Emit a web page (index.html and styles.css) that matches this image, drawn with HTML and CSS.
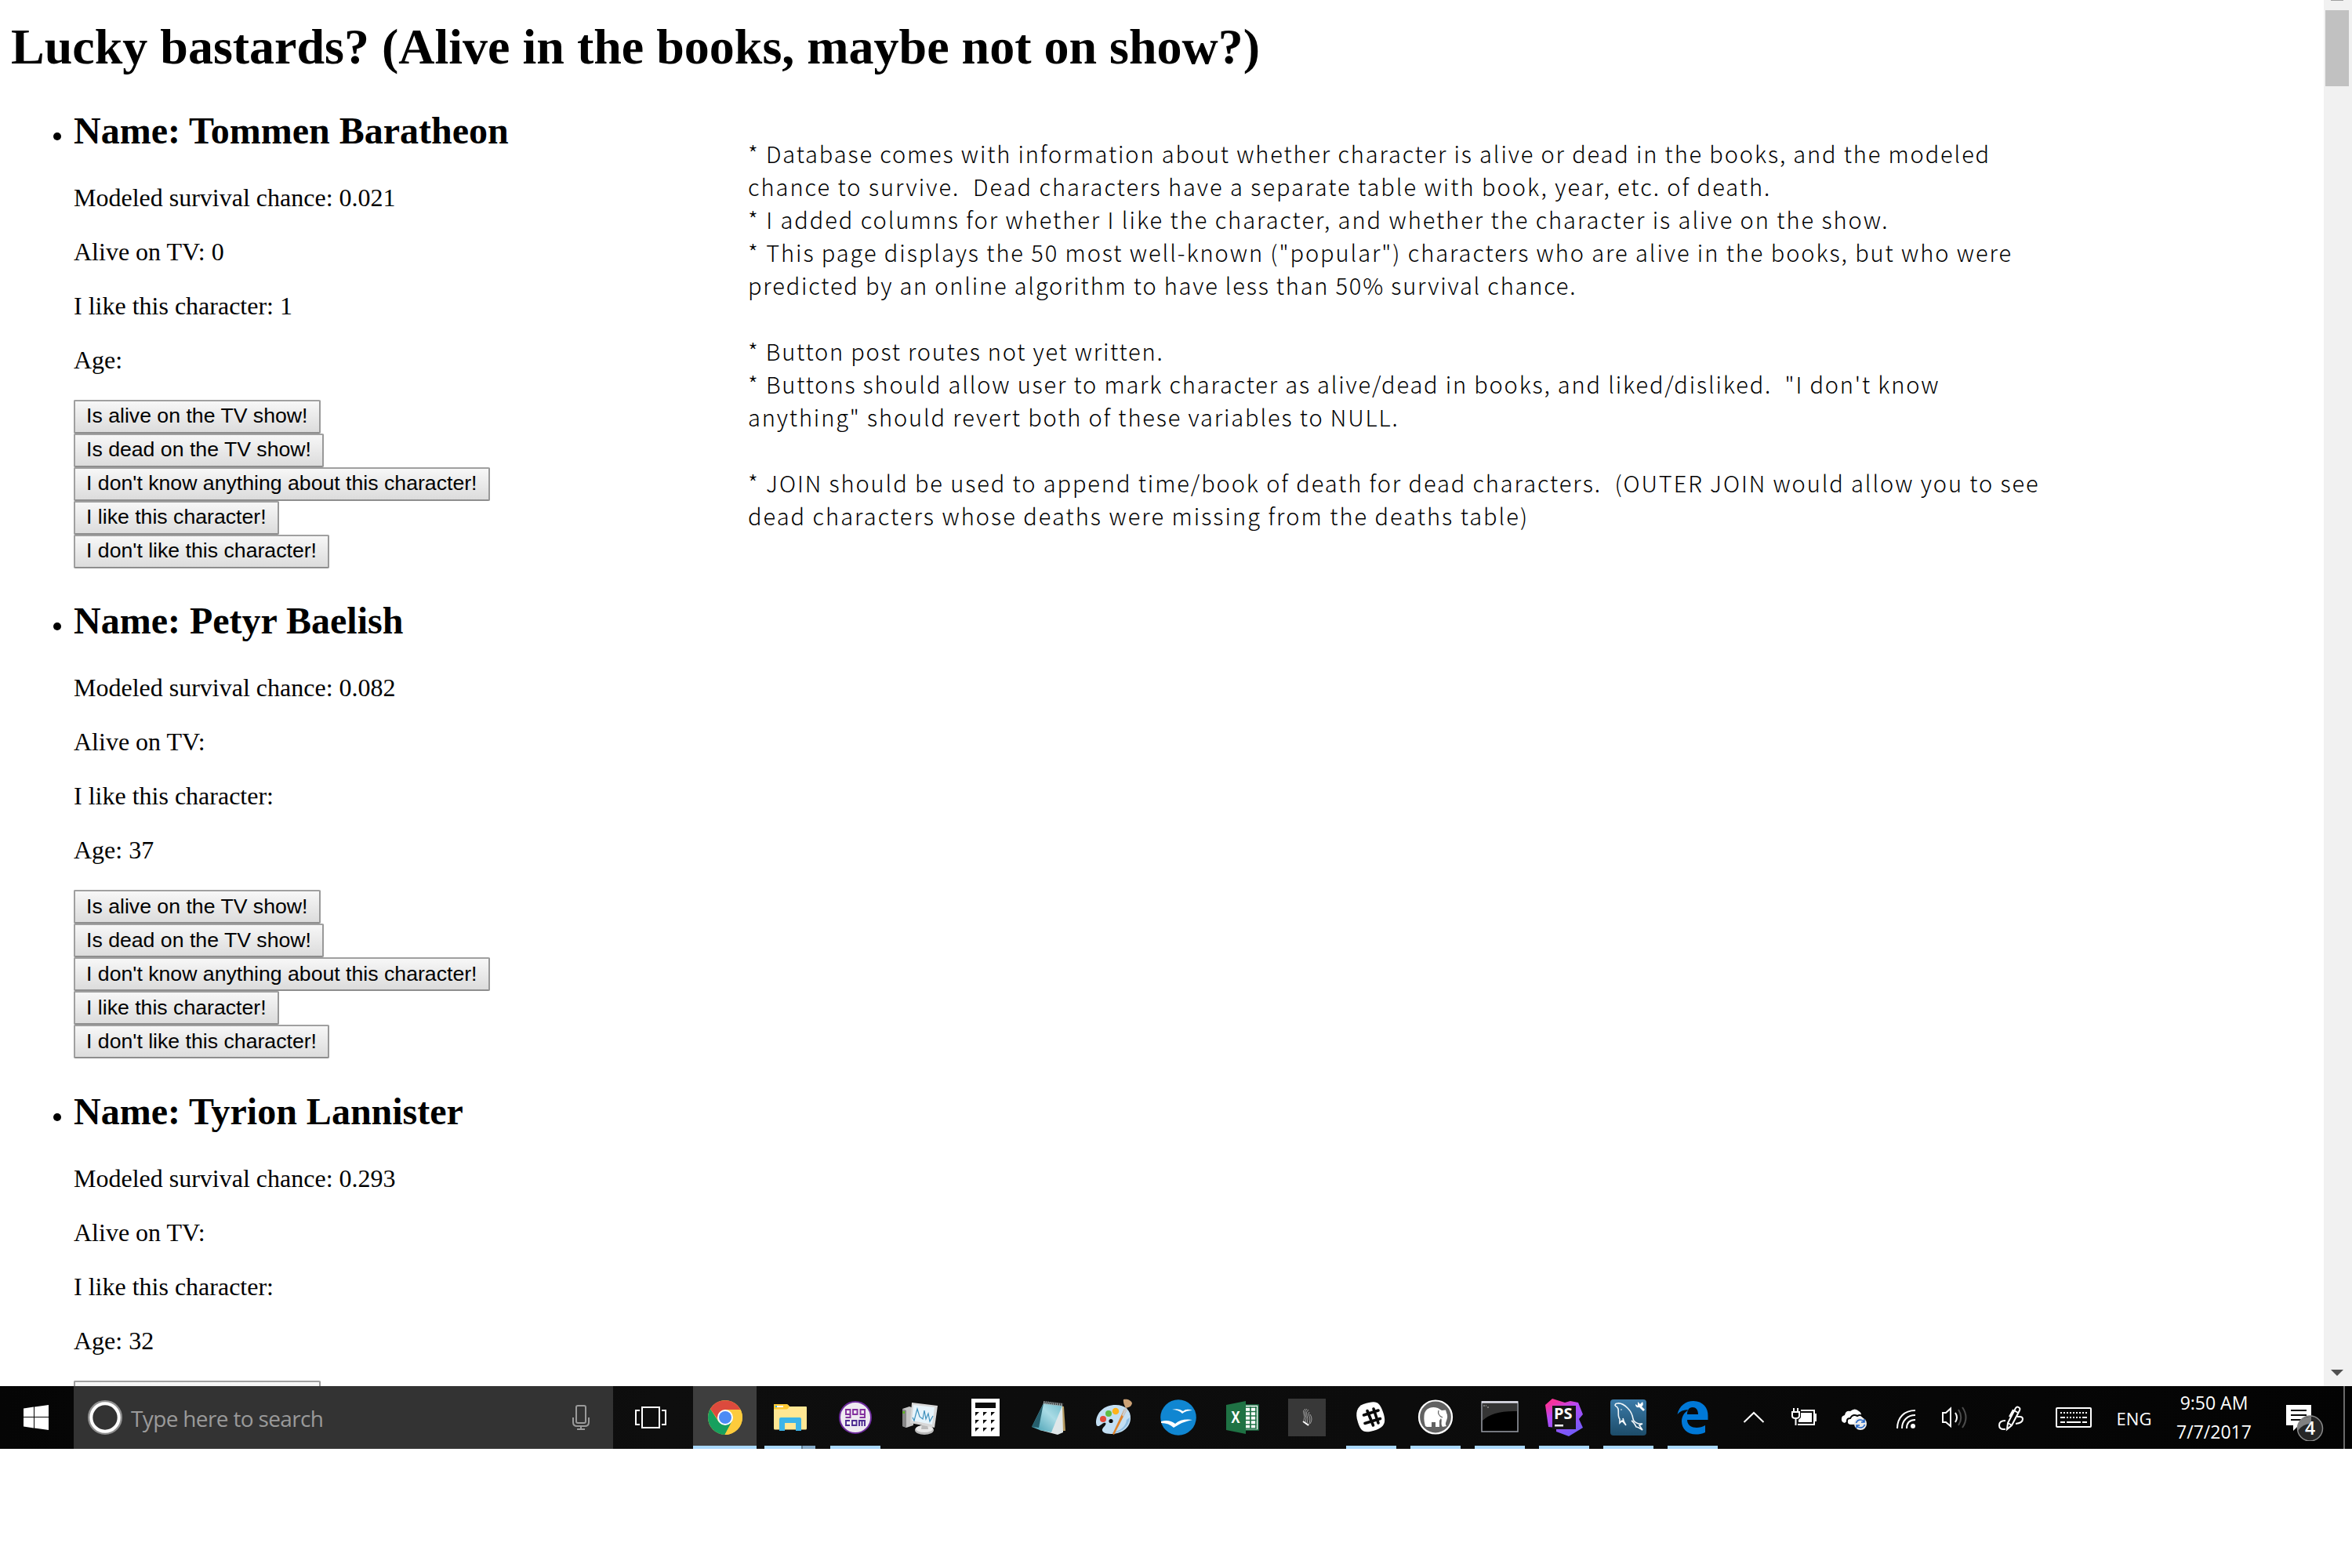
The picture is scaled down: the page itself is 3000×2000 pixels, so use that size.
FILE: index.html
```html
<!DOCTYPE html>
<html lang="en">
<head>
<meta charset="utf-8">
<title>Lucky bastards?</title>
<link rel="stylesheet" href="styles.css">
</head>
<body>
<div class="window">
  <main class="page">
    <h1>Lucky bastards? (Alive in the books, maybe not on show?)</h1>
    <div class="columns">
      <ul class="characters">
        <li>
          <h2>Name: Tommen Baratheon</h2>
          <p>Modeled survival chance: 0.021</p>
          <p>Alive on TV: 0</p>
          <p>I like this character: 1</p>
          <p>Age:</p>
          <div class="actions">
            <button>Is alive on the TV show!</button>
            <button>Is dead on the TV show!</button>
            <button>I don't know anything about this character!</button>
            <button>I like this character!</button>
            <button>I don't like this character!</button>
          </div>
        </li>
        <li>
          <h2>Name: Petyr Baelish</h2>
          <p>Modeled survival chance: 0.082</p>
          <p>Alive on TV:</p>
          <p>I like this character:</p>
          <p>Age: 37</p>
          <div class="actions">
            <button>Is alive on the TV show!</button>
            <button>Is dead on the TV show!</button>
            <button>I don't know anything about this character!</button>
            <button>I like this character!</button>
            <button>I don't like this character!</button>
          </div>
        </li>
        <li>
          <h2>Name: Tyrion Lannister</h2>
          <p>Modeled survival chance: 0.293</p>
          <p>Alive on TV:</p>
          <p>I like this character:</p>
          <p>Age: 32</p>
          <div class="actions">
            <button class="cut"></button>
          </div>
        </li>
      </ul>
      <div class="notes">
        <div>* Database comes with information about whether character is alive or dead in the books, and the modeled</div>
        <div>chance to survive.  Dead characters have a separate table with book, year, etc. of death.</div>
        <div>* I added columns for whether I like the character, and whether the character is alive on the show.</div>
        <div>* This page displays the 50 most well-known ("popular") characters who are alive in the books, but who were</div>
        <div>predicted by an online algorithm to have less than 50% survival chance.</div>
        <div class="gap">* Button post routes not yet written.</div>
        <div>* Buttons should allow user to mark character as alive/dead in books, and liked/disliked.  "I don't know</div>
        <div>anything" should revert both of these variables to NULL.</div>
        <div class="gap">* JOIN should be used to append time/book of death for dead characters.  (OUTER JOIN would allow you to see</div>
        <div>dead characters whose deaths were missing from the deaths table)</div>
      </div>
    </div>
  </main>
  <div class="scrollbar">
    <span class="arrow-up"></span>
    <span class="thumb"></span>
    <span class="arrow-down"></span>
  </div>
</div>
<footer class="taskbar">
  <div class="start">
    <svg width="32" height="32" viewBox="0 0 32 32" fill="#fff"><path d="M0 4.5L13 2.6V15H0zM14 2.4L32 0V15H14zM0 16H13V29.5L0 27.6zM14 16H32V32L14 29.6z"/></svg>
  </div>
  <div class="search">
    <svg width="46" height="46" viewBox="0 0 46 46" fill="none"><circle cx="23" cy="23" r="20.5" stroke="#8f8f8f" stroke-width="3"/><circle cx="23" cy="23" r="17.7" stroke="#fff" stroke-width="4"/></svg>
    <span class="hint">Type here to search</span>
    <svg width="22" height="32" viewBox="0 0 22 32" fill="none" stroke="#9a9a9a" stroke-width="2"><rect x="5" y="1" width="12" height="22" rx="2"/><path d="M1 16V22Q1 27 6 27H16Q21 27 21 22V16M11 27V31M6 31H16"/></svg>
  </div>
  <div class="taskview">
    <svg width="40" height="28" viewBox="0 0 40 28" fill="none" stroke="#fff" stroke-width="2"><rect x="9" y="1" width="22" height="26"/><path d="M6 5H1V23H6M34 5H39V23H34"/></svg>
  </div>
  <div class="apps">
    <div class="app active"><svg viewBox="0 0 48 48"><circle cx="24" cy="24" r="22" fill="#fdcb3c"/><path d="M5 13A22 22 0 0 0 23.500 46L33 28L24 24L16 30z" fill="#17a05e"/><path d="M24 14H43.500A22 22 0 0 1 23.500 46L33 29z" fill="#fdcb3c"/><path d="M5 13A22 22 0 0 1 43.500 14H24Q16 15 15 27z" fill="#dc4a3d"/><circle cx="24" cy="24" r="10" fill="#fff"/><circle cx="24" cy="24" r="8" fill="#4c8bf5"/></svg></div>
    <div class="app wide split"><svg viewBox="0 0 48 48"><path d="M3 8Q3 7 4 7H19Q21 7 23 10H44Q45 10 45 11V38Q45 39.500 43.500 39.500H4.500Q3 39.500 3 38z" fill="#ffe793"/><path d="M3 8Q3 7 4 7H19Q21 7 23 10Q21 13.500 19 13.500H3z" fill="#ffc933"/><path d="M5 9H15V11H5z" fill="#fff"/><path d="M5 9H7V11H5z" fill="#3bb4e8"/><path d="M10 41V26Q10 24 12 24H36Q38 24 38 26V41H31V31H17V41z" fill="#3bb4e8"/></svg></div>
    <div class="app wide open"><svg viewBox="0 0 48 48"><circle cx="24" cy="24" r="20" fill="#eeeaf1" stroke="#6d2a9c" stroke-width="2"/><g fill="none" stroke="#84309e" stroke-width="1.900"><path d="M17.500 14H12V20H17.500M17.500 13V24H11.500M21 14H26.500V20H21zM36 14H30.500V20H36M36 13V24H29.500"/><path stroke="#4d2c91" d="M17 28H12V34H17M20 28H25.500V34H20zM29 35V28H36V35M32.500 28V35"/></g></svg></div>
    <div class="app wide"><svg viewBox="0 0 48 48"><path d="M1 13L10 10L15 12V34L6 37L1 35z" fill="#c6c6c6"/><path d="M1 13L6 15V37L1 35z" fill="#888"/><path d="M1.500 16H4V19H1.500z" fill="#5ab51c"/><ellipse cx="29" cy="40" rx="12" ry="6" fill="#b9b9b9"/><ellipse cx="29" cy="38.500" rx="11" ry="4.500" fill="#e9e9e9"/><path d="M26 32H33L34 39H25z" fill="#bbb"/><path d="M13 5L46 9L42 37L11 31z" fill="#d8d8d8"/><path d="M15 8L42 11L39 33L13 28z" fill="#e7f4fb"/><path d="M14 24L16 28L20 13L23 23L27 26L29 15L31 26L34 19L36 29L40 22" fill="none" stroke="#3e91bd" stroke-width="1.200"/></svg></div>
    <div class="app wide"><svg viewBox="0 0 48 48"><path d="M6 0H42V48H6z" fill="#fff"/><path fill="#0c0c0c" d="M11 5H37V12H11zM11 17H16L11 22zM21 17H26L21 22zM31 17H36L31 22zM11 27H16L11 32zM21 27H26L21 32zM31 27H36L31 32zM11 37H16L11 42zM21 37H26L21 42zM31 37H36L31 42z"/></svg></div>
    <div class="app"><svg viewBox="0 0 48 48"><defs><linearGradient id="pad" x1="0" y1="1" x2="1" y2="0"><stop offset="0" stop-color="#3d9aae"/><stop offset=".6" stop-color="#a9dbe5"/><stop offset="1" stop-color="#72bccb"/></linearGradient></defs><path d="M38 9L42 10L44 41H36z" fill="#b69b62"/><path d="M40 9L41 43L34 46L11 40z" fill="#dfe7e9"/><path d="M16 6L40 9L26 43L11 40L1 36z" fill="url(#pad)"/><path d="M16 6L1 36L10 37z" fill="#265f6d"/><path d="M16 5L41 8" stroke="#a2aaac" stroke-width="4" stroke-dasharray="1.500 1"/></svg></div>
    <div class="app"><svg viewBox="0 0 48 48"><path d="M1 31C1 18 11 8 26 8C38 8 46 15 45 26C44 38 33 45 20 45C12 45 8 42 9 39C10 36 15 33 13 31C10 29 6 36 3 35Q1 34 1 31z" fill="#c3dff3"/><path d="M44 24C43 36 33 44 20 44C32 41 39 36 40 27z" fill="#8ebce0"/><circle cx="10" cy="26" r="4" fill="#e24a3b"/><circle cx="17" cy="19" r="4" fill="#61bc45"/><circle cx="26" cy="16" r="4.300" fill="#ffb31c"/><circle cx="20" cy="28.500" r="2.600" fill="#0b0b0b"/><path d="M37 13L22 45L24 46L40 15z" fill="#e0832a"/><path d="M34 21L38 11L41 13L36 23z" fill="#c8ccd0"/><path d="M36 1C41 0 46 2 47 6C46 10 43 11 39 12Q35 5 36 1z" fill="#cda276"/></svg></div>
    <div class="app"><svg viewBox="0 0 48 48"><circle cx="24" cy="24" r="22.800" fill="#1086d1"/><path d="M16 14Q25 12 30 16Q34 12 42 15Q34 15 29 19Q24 14 16 14z" fill="#fff"/><path d="M2 29Q12 26 20 32Q28 25 42 27Q30 29 18 37Q12 31 2 31z" fill="#fff"/></svg></div>
    <div class="app"><svg viewBox="0 0 48 48"><path d="M27 8H44V40H27z" fill="#fff" stroke="#1e7145" stroke-width="1.500"/><path d="M28 11H42M28 16.500H42M28 22H42M28 27.500H42M28 33H42M28 38H42M34 10V38M41 10V38" stroke="#1e7145" stroke-width="1.700"/><path d="M3 8L28 3V45L3 40z" fill="#1f7244"/><text x="15" y="31" text-anchor="middle" textLength="11" lengthAdjust="spacingAndGlyphs" font-family="Open Sans" font-weight="700" font-size="21" fill="#fff">X</text></svg></div>
    <div class="app"><svg viewBox="0 0 48 48"><path d="M0 0H48V48H0z" fill="#383838"/><g fill="none" stroke="#b5b5b5" stroke-width=".8"><path d="M22 13Q18 15 20 19T20 28M24 13Q20 16 22 20T22 30M26 14Q22 17 24 21T24 32M27 17Q25 19 27 23T26 34M28 20Q32 26 28 32"/><path d="M19 29L26 34" stroke="#fff" stroke-width="2"/></g></svg></div>
    <div class="app open"><svg viewBox="0 0 48 48"><path d="M14 7C30 2 34 3 39 17S40 36 30 40C14 45 11 42 7 30S6 10 14 7z" fill="#fff"/><path d="M19 15.500L26.500 34M27 13L33 31M14.500 21L33 15M16 31.500L35.500 25.500" stroke="#0a0a0a" stroke-width="3.600" stroke-linecap="round"/></svg></div>
    <div class="app open"><svg viewBox="0 0 48 48"><circle cx="24" cy="23.500" r="21" fill="#626262" stroke="#fff" stroke-width="2.200"/><path d="M11 35C10 31 9 27 9.500 22C10 13 18 9 27 12L32 15L37 14.500L38 18C42 26 34 31 38 35L33 36C30 32 33 28 31 25L29 28V36H24V30H19V36H13z" fill="#fff"/><path d="M28 15Q26 21 33 24" fill="none" stroke="#626262" stroke-width="1.200"/></svg></div>
    <div class="app open"><svg viewBox="0 0 48 48"><path d="M1 4H47V42H1z" fill="#000" stroke="#9a9fa8" stroke-width="1.500"/><path d="M2 6H46V16Q15 15 2 28z" fill="#353535"/><path d="M1 4.500H47" stroke="#e4e4ef" stroke-width="2.500"/><path d="M3 9H5M6 9H7M8 11H10" stroke="#bbb"/></svg></div>
    <div class="app open"><svg viewBox="0 0 48 48"><defs><linearGradient id="storm" x1="0" y1="0" x2=".5" y2="1"><stop offset="0" stop-color="#ff318c"/><stop offset=".2" stop-color="#f034a5"/><stop offset=".45" stop-color="#b74af7"/><stop offset="1" stop-color="#765af8"/></linearGradient></defs><path d="M0 8L9 0L25 5L32 3L42 5L48 20L43 26L48 37L30 48L14 42V37L4 36z" fill="url(#storm)"/><path d="M9 9H39V39H9z" fill="#151515"/><path d="M12 33H23V35.500H12z" fill="#fff"/><text x="11" y="26" textLength="23.500" lengthAdjust="spacingAndGlyphs" font-family="Open Sans" font-weight="700" font-size="19" fill="#fff">PS</text></svg></div>
    <div class="app open"><svg viewBox="0 0 48 48"><defs><linearGradient id="sea" x1="0" y1="0" x2="0" y2="1"><stop offset="0" stop-color="#3b7ba9"/><stop offset="1" stop-color="#1d4c69"/></linearGradient></defs><rect x="1" y="1" width="46" height="46" rx="4" fill="url(#sea)"/><path d="M7 9Q7 6 10 6Q16 5 23 12Q29 18 30 26Q31 30 37 32L42 32L38 34L42 40Q36 36 34 36Q31 30 28 28M7 9Q10 10 11 13C12 18 10 23 13 26L13 31L16 28L21 34Q18 30 17 25" fill="none" stroke="#f1f6f9" stroke-width="1.600"/><circle cx="15" cy="14" r=".8" fill="#fff"/><path d="M36 4L39 7L42 4Q44 8 41 10L45 14L43 16L38 11Q33 12 33 7L36 9z" fill="#fff"/></svg></div>
    <div class="app open"><svg viewBox="0 0 48 48"><path d="M4.500 20C7 9 15 3 25 3C37 3 44 12 43.500 22V27H17C17 34 23 37 29 37C33 37 37 36 40 34V43C36 45 32 45.500 28 45.500C17 45.500 10 38 10 29C10 22 14 17 19 14Q9 14 4.500 20zM17 20H31C31 14 28 11 24 11C19 11 17 15 17 20z" fill="#0078d7"/></svg></div>
  </div>
  <div class="tray">
    <svg class="t64" viewBox="0 0 64 48" fill="none" stroke="#fff" stroke-width="2"><path d="M19.500 30L32 18L44.500 30"/></svg>
    <svg class="t64" viewBox="0 0 64 48" fill="none" stroke="#fff" stroke-width="2"><path d="M28 15H45V33H24M45 20H47V28H45M19 12V17M24 12V17M21.500 26V34"/><path d="M17 17H26V22Q26 25 21.500 25Q17 25 17 22z"/><path d="M28 18H42V30H25V27L28 24z" fill="#fff" stroke="none"/></svg>
    <svg class="t64" viewBox="0 0 64 48"><path d="M20 31Q15 30 16 25Q16 22 20 21Q21 15 27 16Q33 11 38 16Q42 18 41 24H28z" fill="#fff"/><path d="M27 34Q22 33 23 28Q23 25 27 25Q30 19 36 22Q42 19 45 26Q47 34 42 34z" fill="#fff" stroke="#050505" stroke-width="2"/><circle cx="40" cy="32" r="8" fill="#eaeaea"/><path d="M34.500 31Q36 27 40 27Q43 27 45 29.500M45 26V30H41M45.500 33Q44 37 40 37Q37 37 35 34.500M35 38V34H39" fill="none" stroke="#1f63c6" stroke-width="1.500"/></svg>
    <svg class="t64" viewBox="0 0 64 48" fill="none" stroke="#fff" stroke-width="2"><path d="M23 38C23 24 32 15 46 15M29 38C29 28 36 21 46 21M35 38C35 31 39 27 46 27"/><circle cx="43" cy="35" r="3" fill="#fff" stroke="none"/></svg>
    <svg class="t64" viewBox="0 0 64 48" fill="none" stroke="#fff" stroke-width="2"><path d="M17 18H21L27 12.500V35L21 30H17z"/><path d="M33 18Q37 24 33 30"/><path d="M37 14Q43.500 24 37 34M42 11Q51 24 42 37" stroke="#4c4c4c"/></svg>
    <svg class="t80" viewBox="0 0 80 48" fill="none" stroke="#fff" stroke-width="2"><path d="M35 39L36 31L46 12Q48 9 51 12Q52 13 51 15L41 34zM44 15L49 18M36 31L41 34M38 23L43 14"/><path d="M33 28Q25 28 25 34Q25 39 31 39H33M48 23H51Q55 23 55 26Q55 31 46 32"/></svg>
    <svg class="t80" viewBox="0 0 80 48" fill="none" stroke="#fff" stroke-width="2"><rect x="18" y="12" width="44" height="24" rx="1"/><path d="M23 18H58" stroke-dasharray="2 2"/><path d="M31 24H51" stroke-dasharray="2 2"/><path d="M23 24H29M51 24H57M23 30H29M31 30H49M51 30H57"/></svg>
    <span class="lang">ENG</span>
    <div class="clock"><span>9:50 AM</span><span>7/7/2017</span></div>
    <svg class="notice" viewBox="0 0 100 60"><path d="M27 14H59V40H43L36 47V40H27z" fill="#fff"/><path d="M33 21H53M33 27H53M33 33H53" stroke="#080808" stroke-width="2"/><circle cx="57.500" cy="44" r="16" fill="#262626" stroke="#8b8b8b" stroke-width="1.500"/><path d="M42 40A16 16 0 0 1 59 29V38Q48 38 42 47z" fill="#808080"/><text x="57.500" y="52" text-anchor="middle" font-family="Open Sans" font-weight="600" font-size="23" fill="#fff">4</text></svg>
    <span class="peek"></span>
  </div>
</footer>
</body>
</html>
```
FILE: styles.css
```css
* { box-sizing: border-box; }
body {
  margin: 0;
  width: 3000px;
  height: 2000px;
  overflow: hidden;
  background: #fff;
  color: #000;
  font: 32px "Liberation Serif", serif;
}
.window {
  display: flex;
  height: 1768px;
  overflow: hidden;
}
.page {
  width: 2964px;
  padding: 23px 0 0 14px;
}
h1 {
  margin: 0;
  font-size: 64px;
  line-height: 73px;
}
.columns {
  display: grid;
  grid-template-columns: 940px 1fr;
}
.characters {
  margin: 3px 0 0;
  padding-left: 80px;
}
h2 {
  margin: 39.84px 0;
  font-size: 48px;
  line-height: 55px;
}
li p {
  margin: 32px 0;
  line-height: 37px;
}
.actions {
  display: flex;
  flex-direction: column;
  align-items: flex-start;
  height: 215px;
}
button {
  height: 43px;
  padding: 0 14px 1px;
  border: 2px solid #a0a0a0;
  border-right-color: #999;
  border-bottom-color: #8e8e8e;
  border-radius: 2px;
  background: linear-gradient(#f7f7f7, #dcdcdc);
  color: #000;
  font: 26.667px "Liberation Sans", sans-serif;
  white-space: nowrap;
}
.cut { width: 315px; }
.notes {
  padding-top: 78px;
  font: 300 29px/42px "Noto Sans CJK JP", sans-serif;
  letter-spacing: 1.87px;
}
.notes div { white-space: pre; }
.notes .gap { margin-top: 42px; }
.notes div:nth-child(2) { letter-spacing: 2px; }
.notes div:nth-child(3) { letter-spacing: 1.97px; }
.notes div:nth-child(4) { letter-spacing: 1.94px; }
.notes div:nth-child(5) { letter-spacing: 1.81px; }
.notes div:nth-child(6) { letter-spacing: 1.78px; }
.notes div:nth-child(7) { letter-spacing: 1.83px; }
.notes div:nth-child(9) { letter-spacing: 1.91px; }
.notes div:nth-child(10) { letter-spacing: 2.03px; }
.scrollbar {
  display: flex;
  flex-direction: column;
  width: 36px;
  background: #f1f1f1;
}
.arrow-up {
  width: 16px;
  height: 1px;
  margin-left: 9px;
  background: #a0a0a0;
}
.thumb {
  width: 30px;
  height: 97px;
  margin: 12px 0 0 2px;
  background: #c1c1c1;
}
.arrow-down {
  width: 16px;
  height: 8px;
  margin: auto 0 13px 9px;
  background: #505050;
  clip-path: polygon(0 0, 100% 0, 50% 100%);
}
.taskbar {
  display: flex;
  height: 80px;
  background: linear-gradient(90deg, #050505, #0e0e0e 28%, #0c0c0c 60%, #030303);
}
.taskbar svg { display: block; flex: none; }
.start {
  display: flex;
  align-items: center;
  width: 94px;
  padding-left: 30px;
}
.search {
  display: flex;
  align-items: center;
  width: 688px;
  padding: 0 30px 0 17px;
  background: #333;
}
.hint {
  flex: 1;
  padding: 2px 0 0 10px;
  color: #9a9a9a;
  font: 28px/40px "Open Sans", sans-serif;
  letter-spacing: -0.65px;
}
.taskview {
  display: flex;
  align-items: center;
  width: 102px;
  padding-left: 28px;
}
.apps { display: flex; }
.app {
  display: flex;
  justify-content: center;
  align-items: center;
  width: 82px;
}
.wide { width: 83px; }
.app svg { width: 48px; height: 48px; }
.open {
  background: linear-gradient(#a9d8fd, #a9d8fd) center bottom / 64px 4px no-repeat;
}
.active {
  width: 81px;
  margin-right: 1px;
  border-bottom: 4px solid #a9d8fd;
  background: #3e3e3e;
}
.active svg { margin-top: 4px; }
.split {
  background: linear-gradient(90deg, #a9d8fd 47px, #5f7b90 47px 49px, #86abc9 49px) center bottom / 65px 4px no-repeat;
}
.tray {
  display: flex;
  align-items: center;
  padding-left: 5px;
  color: #fff;
  font-family: "Open Sans", sans-serif;
}
.t64 { width: 64px; height: 48px; }
.t80 { width: 80px; height: 48px; }
.lang {
  width: 74px;
  padding-top: 2px;
  text-align: center;
  font-size: 22px;
  line-height: 40px;
}
.clock {
  display: flex;
  flex-direction: column;
  width: 130px;
  text-align: center;
  font-size: 23px;
  line-height: 37px;
}
.notice { width: 100px; height: 60px; }
.peek {
  width: 2px;
  height: 80px;
  background: #6a6a6a;
}
```
